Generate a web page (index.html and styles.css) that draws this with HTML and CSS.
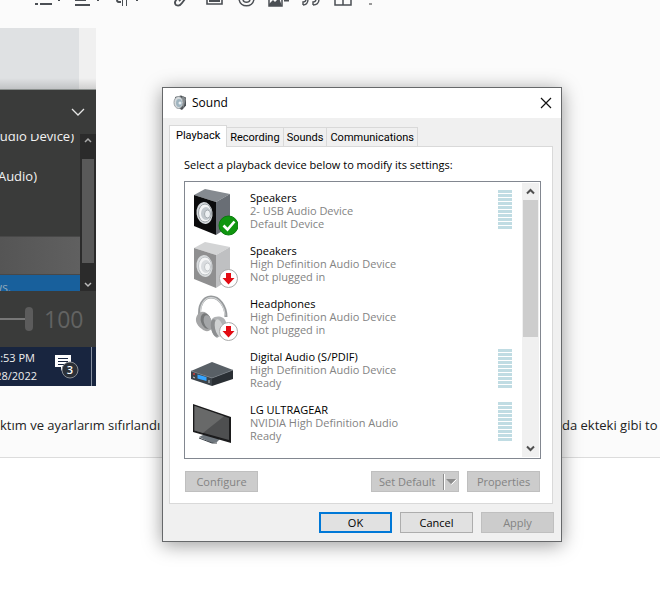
FILE: index.html
```html
<!DOCTYPE html>
<html lang="en">
<head>
<meta charset="utf-8">
<title>Sound</title>
<link rel="stylesheet" href="styles.css">
</head>
<body>
<main class="editor">
  <div class="toolbar">
    <svg width="400" height="12" viewBox="0 0 400 12" fill="none" stroke="#4b4f54" stroke-width="2" aria-hidden="true">
      <path d="M35 4h3M40 4h12M75 0h11M75 5h15" />
      <path d="M58 .5h2M97 .5h2M136 .5h2" stroke-width="1"/>
      <path d="M117 0c0 2 1 2 4 2" stroke-width="2"/><path d="M122.500 0v6M126.500 0v6" stroke-width="1"/>
      <path d="M177 -1c-2 2-3 4-1 6 2 1 4 1 6-2l3-4M179 1l2-2" stroke-width="1.800"/>
      <path d="M207 -1v5h15v-5" stroke-width="1.600"/><path d="M209 0h11v2h-11z" fill="#4b4f54" stroke="none"/>
      <path d="M239 -1c1 9 14 9 15 0M243 0c1 3 6 3 7 0" stroke-width="1.500"/>
      <path d="M269 -1v7h13v-7" stroke-width="1.500"/><path d="M269 6V4l4-4 2 2 4-4 3 8z" fill="#4b4f54" stroke="none"/><path d="M284 .5h5"/>
      <path d="M303 5c3 0 5-2 5-6M303 5v-3c2 0 3-1 3-3M313 5c4 0 6-2 6-6M313 5v-3c2 0 3-1 3-3" stroke-width="1.400"/>
      <path d="M335 -1v6h16v-6M343 0v5" stroke-width="1.500"/>
      <path d="M369 4h3" stroke="#999"/>
    </svg>
  </div>
  <figure class="shot">
    <div class="shot-top"></div>
    <div class="flyout">
      <div class="flyout-head"><svg width="14" height="8" viewBox="0 0 14 8" fill="none" stroke="#e6e6e6" stroke-width="1.300"><path d="M1 1l6 6 6-6"/></svg></div>
      <div class="flyout-list">
        <div class="flyout-items">
          <span class="item cut">udio Device)</span>
          <span class="item">Audio)</span>
          <div class="hover-row"></div>
          <div class="blue-row"><span>ws.</span></div>
        </div>
        <div class="dark-scroll">
          <svg width="8" height="6" viewBox="0 0 8 6" fill="none" stroke="#aaa" stroke-width="1.500"><path d="M1 5l3-3 3 3"/></svg>
          <div class="dark-thumb"></div>
          <svg width="8" height="6" viewBox="0 0 8 6" fill="none" stroke="#bbb" stroke-width="1.500"><path d="M1 1l3 3 3-3"/></svg>
        </div>
      </div>
      <div class="volume"><i class="track"></i><i class="knob"></i><span>100</span></div>
    </div>
    <div class="taskbar">
      <div class="clock"><span class="time">:53 PM</span><span>28/2022</span></div>
      <svg width="26" height="26" viewBox="0 0 26 26"><path d="M1 1h16v12h-7l-3 4v-4H1z" fill="#fff"/><path d="M4 4.500h10M4 7.500h10M4 10.500h7" stroke="#18253f"/><circle cx="16" cy="16" r="8" fill="#2b3038" stroke="#888c92"/><text x="16" y="20" class="count">3</text></svg>
      <i class="peek"></i>
    </div>
  </figure>
  <p class="post"><span>ktım ve ayarlarım sıfırlandı</span><span>da ekteki gibi to</span></p>
</main>

<section class="dialog" role="dialog" aria-labelledby="title">
  <header class="titlebar">
    <svg width="14" height="16" viewBox="0 0 14 16"><path d="M2 2l6-1.500 5 2v8L9 15l-6-3z" fill="#4c5155"/><path d="M9 1l2 1 2 2-3 10z" fill="#83898c"/><ellipse cx="5.500" cy="7.500" rx="4.500" ry="6" fill="#d5dadd" stroke="#9aa0a4"/><ellipse cx="6" cy="8" rx="3" ry="4" fill="#9fb4bf"/><circle cx="7" cy="8" r="1.500" fill="#e8eef2"/></svg>
    <h1 id="title">Sound</h1>
    <button class="close" aria-label="Close"><svg width="12" height="12" viewBox="0 0 12 12" stroke="#111" stroke-width="1.200"><path d="M1 1l10 10M11 1L1 11"/></svg></button>
  </header>
  <nav class="tabs" role="tablist">
    <button class="tab active" role="tab" aria-selected="true">Playback</button>
    <button class="tab" role="tab">Recording</button>
    <button class="tab" role="tab">Sounds</button>
    <button class="tab" role="tab">Communications</button>
  </nav>
  <div class="panel">
    <p class="hint">Select a playback device below to modify its settings:</p>
    <div class="listbox">
      <ul class="devices">
        <li class="device">
          <svg width="48" height="48" viewBox="0 0 48 48"><path d="M4 7L15 1l25 5-14 8z" fill="#858a90"/><path d="M26 14l14-8v32l-14 9z" fill="#696e75"/><path d="M4 7l22 7v33L4 38z" fill="#0b0b0c"/><ellipse cx="14.500" cy="25" rx="8" ry="11" fill="#d5d9dc" transform="rotate(-8 15 25)"/><ellipse cx="15" cy="25" rx="6.500" ry="9" fill="#f5f6f7" stroke="#9da3a8"/><ellipse cx="16" cy="25.500" rx="5" ry="6.500" fill="#c3c9ce"/><ellipse cx="17.500" cy="26" rx="3" ry="4" fill="#eef1f3" stroke="#a5abb0"/><circle cx="38.500" cy="37.500" r="9.500" fill="#0f960f" stroke="#087a0c"/><path d="M33.500 37.500l4 4 7-8" fill="none" stroke="#fff" stroke-width="2.600"/></svg>
          <div class="info"><strong>Speakers</strong><span>2- USB Audio Device</span><span>Default Device</span></div>
          <i class="meter"></i>
        </li>
        <li class="device">
          <svg width="48" height="48" viewBox="0 0 48 48"><path d="M4 7L15 1l25 5-14 8z" fill="#d3d4d5"/><path d="M26 14l14-8v32l-14 9z" fill="#bfc0c2"/><path d="M4 7l22 7v33L4 38z" fill="#8f8f90"/><ellipse cx="14.500" cy="25" rx="8" ry="11" fill="#d9dcde" transform="rotate(-8 15 25)"/><ellipse cx="15" cy="25" rx="6.500" ry="9" fill="#f5f6f7" stroke="#c0c4c7"/><ellipse cx="16" cy="25.500" rx="5" ry="6.500" fill="#d9dcdf"/><ellipse cx="17.500" cy="26" rx="3" ry="4" fill="#f3f5f6" stroke="#c3c7ca"/><circle cx="38.500" cy="37.500" r="9" fill="#fff" stroke="#aaa"/><path d="M36 32h5v5h3.500l-6 6.500-6-6.500H36z" fill="#e30b13"/></svg>
          <div class="info"><strong>Speakers</strong><span>High Definition Audio Device</span><span>Not plugged in</span></div>
        </li>
        <li class="device">
          <svg width="48" height="48" viewBox="0 0 48 48"><path d="M10 24C8 12 13 3 21 3s15 9 15 20" fill="none" stroke="#979a9c" stroke-width="3"/><path d="M11 22C9 12 14 3.500 21 3.500s13.500 8 14 18" fill="none" stroke="#d3d5d6" stroke-width="1.200"/><path d="M8 20c4-4 9-2 12 3l2 11c-2 4-7 4-10 1-6-4-8-10-4-15z" fill="#a5a6a7"/><ellipse cx="16" cy="27" rx="5" ry="8" fill="#77797a" transform="rotate(-18 16 27)"/><ellipse cx="18" cy="28" rx="4" ry="7" fill="#a4a6a8" transform="rotate(-18 18 28)"/><path d="M22 25c4-4 12-3 14 3v10l-9 6c-5-2-8-13-5-19z" fill="#b0b2b4"/><ellipse cx="25" cy="34" rx="4" ry="9" fill="#8c8e90" transform="rotate(-12 25 34)"/><ellipse cx="29" cy="34" rx="4" ry="9" fill="#cfd1d2" transform="rotate(-12 29 34)"/><circle cx="38.500" cy="37.500" r="9" fill="#fff" stroke="#aaa"/><path d="M36 32h5v5h3.500l-6 6.500-6-6.500H36z" fill="#e30b13"/></svg>
          <div class="info"><strong>Headphones</strong><span>High Definition Audio Device</span><span>Not plugged in</span></div>
        </li>
        <li class="device">
          <svg width="48" height="48" viewBox="0 0 48 48"><path d="M1 24l21-9 21 8-21 8z" fill="#596066"/><path d="M1 24l21 7v8L1 32z" fill="#3d444a"/><path d="M22 31l21-8v9l-21 7z" fill="#2a2f34"/><path d="M1 24l21 7 21-8" fill="none" stroke="#787f86" stroke-width=".7"/><path d="M7.500 27.500l9 2.500v4l-9-2.500z" fill="#35a5ff"/><circle cx="4" cy="27" r="1" fill="#d33a3a"/><path d="M3 30l2 1M19 33v3" stroke="#c6cbd0"/></svg>
          <div class="info"><strong>Digital Audio (S/PDIF)</strong><span>High Definition Audio Device</span><span>Ready</span></div>
          <i class="meter"></i>
        </li>
        <li class="device">
          <svg width="48" height="48" viewBox="0 0 48 48"><path d="M9 37l6-3 15 5-3 3-5 1z" fill="#6f777e"/><path d="M9 38l13 5h5" fill="none" stroke="#3b4147"/><path d="M3 4l38 13v26L3 32z" fill="#1b1b1c"/><path d="M4.500 6L39 18v22L4.500 30.500z" fill="#4e4f50"/><path d="M4.500 6L34 16.300 13 33 4.500 30.500z" fill="#686969"/></svg>
          <div class="info"><strong>LG ULTRAGEAR</strong><span>NVIDIA High Definition Audio</span><span>Ready</span></div>
          <i class="meter"></i>
        </li>
      </ul>
      <div class="scrollbar">
        <svg width="9" height="7" viewBox="0 0 9 7" fill="none" stroke="#505050" stroke-width="2"><path d="M1 5.500l3.500-3.500 3.500 3.500"/></svg>
        <div class="thumb"></div>
        <svg width="9" height="7" viewBox="0 0 9 7" fill="none" stroke="#505050" stroke-width="2"><path d="M1 1.500l3.500 3.500 3.500-3.500"/></svg>
      </div>
    </div>
    <div class="actions">
      <button class="btn" disabled>Configure</button>
      <button class="btn split" disabled><span>Set Default</span><svg width="14" height="16" viewBox="0 0 14 16"><path d="M.5 0v16" stroke="#8d8d8d"/><path d="M1.500 0v16" stroke="#fff"/><path d="M3 5h10l-5 5z" fill="#8d8d8d"/><path d="M8.500 10.500l5-5" stroke="#fff"/></svg></button>
      <button class="btn" disabled>Properties</button>
    </div>
  </div>
  <footer class="footer">
    <button class="btn primary">OK</button>
    <button class="btn">Cancel</button>
    <button class="btn" disabled>Apply</button>
  </footer>
</section>
</body>
</html>
```
FILE: styles.css
```css
* { box-sizing: border-box; }
body {
  margin: 0;
  min-height: 100vh;
  background: #fff;
  font-family: "Open Sans", "Noto Sans", sans-serif;
  overflow: hidden;
}
svg { display: block; flex: none; }
button { font: inherit; margin: 0; }

.editor {
  background: #fbfbfb;
  border-bottom: 1px solid #dcdcdc;
  padding-bottom: 22px;
}
.toolbar { height: 28px; overflow: hidden; }

.shot { width: 96px; margin: 0; overflow: hidden; }
.shot-top {
  height: 62px;
  background: linear-gradient(#0000 50px, #0002), linear-gradient(90deg, #dfe1e3 79px, #f0f0f0 79px);
  border-bottom: 1px solid #8a8f8d;
}
.flyout { background: #3a3b3a; color: #f2f2f2; }
.flyout-head {
  height: 44px;
  display: flex;
  justify-content: flex-end;
  align-items: center;
  padding-right: 11px;
}
.flyout-list { display: flex; height: 157px; overflow: hidden; }
.flyout-items {
  flex: 1;
  min-width: 0;
  display: flex;
  flex-direction: column;
  align-items: flex-end;
  overflow: hidden;
}
.item { font-size: 13px; line-height: 20px; white-space: nowrap; padding-right: 43px; margin-bottom: 50px; }
.item.cut { padding-right: 6px; margin: -8px 0 20px; }
.hover-row { flex: none; width: 100%; height: 39px; background: linear-gradient(90deg, #555, #606060); border: solid #484848; border-width: 1px 0; }
.blue-row {
  flex: 1;
  width: 100%;
  background: #18609c;
  display: flex;
  justify-content: flex-end;
  padding: 4px 69px 0 0;
  font-size: 12px;
  line-height: 18px;
  color: #93a9bb;
}
.dark-scroll {
  width: 16px;
  background: #2b2b2b;
  display: flex;
  flex-direction: column;
  align-items: center;
  padding: 3px 0;
}
.dark-thumb { width: 12px; height: 105px; margin: 16px 0 19px; background: #595959; }
.volume { height: 56px; display: flex; align-items: center; color: #626362; font-size: 23px; }
.track { width: 25px; height: 2px; background: #777; }
.knob { width: 8px; height: 24px; border-radius: 4px; background: #5c5c5c; margin-right: 11px; }
.taskbar { height: 39px; background: #18253f; display: flex; align-items: center; color: #eee; }
.clock {
  flex: none;
  width: 37px;
  display: flex;
  flex-direction: column;
  align-items: flex-end;
  font-size: 11px;
  line-height: 18px;
  margin-right: 17px;
  white-space: nowrap;
}
.time { padding-right: 2px; }
.count { fill: #fff; font-size: 11px; font-weight: 600; text-anchor: middle; }
.peek { width: 1px; height: 39px; margin-left: 11px; background: #8790a0; }

.post {
  display: flex;
  gap: 401px;
  margin: 29px 0 0;
  font-size: 13px;
  line-height: 20px;
  color: #222;
  white-space: nowrap;
}
.post span:first-child { flex: none; width: 161px; }

.dialog {
  position: absolute;
  left: 162px;
  top: 87px;
  width: 400px;
  background: #f0f0f0;
  border: 1px solid #66686a;
  box-shadow: 0 3px 18px rgba(0, 0, 0, .4);
  font-size: 11px;
  color: #000;
}
.titlebar { height: 30px; background: #fff; display: flex; align-items: center; padding: 0 9px 0 10px; gap: 5px; }
.titlebar h1 { margin: 0; font-size: 12px; line-height: 16px; padding-bottom: 1px; font-weight: 400; flex: 1; }
.close { border: 0; padding: 0; background: none; }

.tabs { display: flex; align-items: flex-end; padding: 7px 6px 0; height: 28px; }
.tab {
  height: 19px;
  padding: 1px 3px 0;
  border: 1px solid #d9d9d9;
  border-width: 1px 1px 0 0;
  background: #f0f0f0;
  font-family: Roboto, sans-serif;
  line-height: 17px;
}
.tab.active {
  height: 22px;
  padding: 0 6px 3px;
  background: #fff;
  border-left-width: 1px;
  margin-bottom: -1px;
  position: relative;
  z-index: 1;
}
.panel { margin: 0 8px 8px 6px; padding: 10px 11px 11px 14px; background: #fff; border: 1px solid #d9d9d9; }
.hint { margin: 0 0 9px; line-height: 15px; }
.listbox { display: flex; height: 278px; border: 1px solid #828790; overflow: hidden; padding: 1px; }
.devices { flex: 1; margin: 0; padding: 2px 10px 0 4px; list-style: none; }
.device { height: 53px; display: flex; align-items: center; }
.info { flex: 1; margin-left: 12px; padding-bottom: 2px; display: flex; flex-direction: column; line-height: 13px; color: #838383; }
.info strong { font-weight: 400; color: #000; }
.meter {
  width: 14px;
  height: 39px;
  margin-bottom: 4px;
  background: repeating-linear-gradient(#c0dce3 0 3px, #fff 3px 4px);
}
.scrollbar { width: 17px; background: #f0f0f0; display: flex; flex-direction: column; align-items: center; justify-content: space-between; padding: 5px 0; }
.thumb { width: 15px; height: 137px; margin: 5px 0 auto; background: #cdcdcd; }
.actions { display: flex; gap: 8px; margin-top: 12px; padding: 0 1px; }
.actions .btn:first-child { margin-right: auto; }
.btn {
  width: 73px;
  height: 21px;
  padding: 0;
  border: 1px solid #adadad;
  background: #e1e1e1;
  color: #000;
  line-height: 17px;
}
.btn:disabled { background: #ccc; border-color: #bfbfbf; color: #838383; }
.btn.split { width: 88px; display: flex; align-items: center; justify-content: space-between; padding: 0 1px 0 7px; }
.btn.primary { border: 2px solid #0078d7; }
.footer { display: flex; justify-content: flex-end; gap: 8px; padding: 0 7px 8px; }
```
